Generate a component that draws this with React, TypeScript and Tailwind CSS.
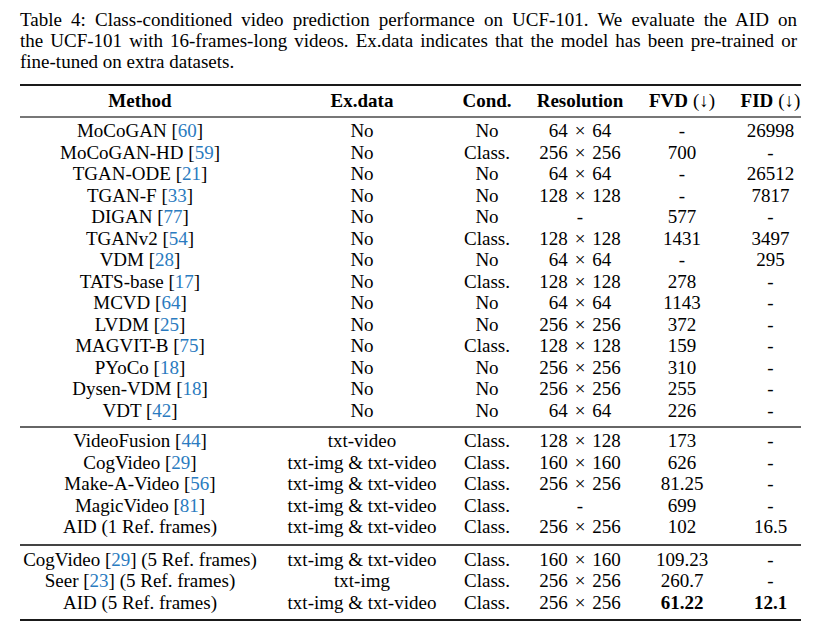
import React from "react";

type Cite = { name: string; cite?: string; suffix?: string };
type Row = {
  m: Cite;
  ex: string;
  cond: string;
  res: string;
  fvd: string;
  fid: string;
  bold?: boolean;
};

const r = (
  name: string,
  cite: string | undefined,
  ex: string,
  cond: string,
  res: string,
  fvd: string,
  fid: string,
  suffix?: string,
  bold?: boolean
): Row => ({ m: { name, cite, suffix }, ex, cond, res, fvd, fid, bold });

const sec1: Row[] = [
  r("MoCoGAN", "60", "No", "No", "64x64", "-", "26998"),
  r("MoCoGAN-HD", "59", "No", "Class.", "256x256", "700", "-"),
  r("TGAN-ODE", "21", "No", "No", "64x64", "-", "26512"),
  r("TGAN-F", "33", "No", "No", "128x128", "-", "7817"),
  r("DIGAN", "77", "No", "No", "-", "577", "-"),
  r("TGANv2", "54", "No", "Class.", "128x128", "1431", "3497"),
  r("VDM", "28", "No", "No", "64x64", "-", "295"),
  r("TATS-base", "17", "No", "Class.", "128x128", "278", "-"),
  r("MCVD", "64", "No", "No", "64x64", "1143", "-"),
  r("LVDM", "25", "No", "No", "256x256", "372", "-"),
  r("MAGVIT-B", "75", "No", "Class.", "128x128", "159", "-"),
  r("PYoCo", "18", "No", "No", "256x256", "310", "-"),
  r("Dysen-VDM", "18", "No", "No", "256x256", "255", "-"),
  r("VDT", "42", "No", "No", "64x64", "226", "-"),
];

const sec2: Row[] = [
  r("VideoFusion", "44", "txt-video", "Class.", "128x128", "173", "-"),
  r("CogVideo", "29", "txt-img & txt-video", "Class.", "160x160", "626", "-"),
  r("Make-A-Video", "56", "txt-img & txt-video", "Class.", "256x256", "81.25", "-"),
  r("MagicVideo", "81", "txt-img & txt-video", "Class.", "-", "699", "-"),
  r("AID (1 Ref. frames)", undefined, "txt-img & txt-video", "Class.", "256x256", "102", "16.5"),
];

const sec3: Row[] = [
  r("CogVideo", "29", "txt-img & txt-video", "Class.", "160x160", "109.23", "-", " (5 Ref. frames)"),
  r("Seer", "23", "txt-img", "Class.", "256x256", "260.7", "-", " (5 Ref. frames)"),
  r("AID (5 Ref. frames)", undefined, "txt-img & txt-video", "Class.", "256x256", "61.22", "12.1", undefined, true),
];

const GRID = "grid grid-cols-[240px_204px_46px_140px_64px_87px]";

function Cell({ children, last }: { children: React.ReactNode; last?: boolean }) {
  return (
    <div className={"flex justify-center whitespace-nowrap " + (last ? "pl-[26px]" : "")}>
      {children}
    </div>
  );
}

function Res({ v }: { v: string }) {
  if (v === "-") return <span>-</span>;
  const [a, b] = v.split("x");
  return (
    <span>
      {a}
      <span className="mx-[7px]">×</span>
      {b}
    </span>
  );
}

function Method({ m }: { m: Cite }) {
  return (
    <span>
      {m.name}
      {m.cite && (
        <>
          {" "}[<span className="text-[#2a7bc0]">{m.cite}</span>]
        </>
      )}
      {m.suffix}
    </span>
  );
}

function DataRow({ row }: { row: Row }) {
  return (
    <div className={GRID + " h-[21.5px] items-center leading-[21.5px]"}>
      <Cell>
        <Method m={row.m} />
      </Cell>
      <Cell>{row.ex}</Cell>
      <Cell>{row.cond}</Cell>
      <Cell>
        <Res v={row.res} />
      </Cell>
      <Cell>{row.bold ? <b>{row.fvd}</b> : row.fvd}</Cell>
      <Cell last>{row.bold ? <b>{row.fid}</b> : row.fid}</Cell>
    </div>
  );
}

export default function App() {
  return (
    <div
      className="w-[827px] h-[627px] bg-white text-black text-[19px] overflow-hidden"
      style={{ fontFamily: '"Liberation Serif", "Times New Roman", serif' }}
    >
      <div className="pt-[9px] pl-[20px] pr-[30px] leading-[21px]">
        <div className="text-justify [text-align-last:justify]">
          Table 4: Class-conditioned video prediction performance on UCF-101. We evaluate the AID on
        </div>
        <div className="text-justify [text-align-last:justify]">
          the UCF-101 with 16-frames-long videos. Ex.data indicates that the model has been pre-trained or
        </div>
        <div>fine-tuned on extra datasets.</div>
      </div>

      <div className="ml-[20px] w-[781px] mt-[12px]">
        <div className="h-[2px] bg-[#1a1a1a]" />
        <div className={GRID + " h-[30px] items-center font-bold"}>
          <Cell>Method</Cell>
          <Cell>Ex.data</Cell>
          <Cell>Cond.</Cell>
          <Cell>Resolution</Cell>
          <Cell>
            FVD<span className="font-normal ml-[5px]">(↓)</span>
          </Cell>
          <Cell last>
            FID<span className="font-normal ml-[5px]">(↓)</span>
          </Cell>
        </div>
        <div className="h-[2px] bg-[#777777]" />
        <div className="pt-[2px]">
          {sec1.map((row, i) => (
            <DataRow key={i} row={row} />
          ))}
        </div>
        <div className="mt-[5px] h-[2px] bg-[#666666]" />
        <div className="pt-[2px]">
          {sec2.map((row, i) => (
            <DataRow key={i} row={row} />
          ))}
        </div>
        <div className="mt-[6px] h-[2px] bg-[#444444]" />
        <div className="pt-[3px]">
          {sec3.map((row, i) => (
            <DataRow key={i} row={row} />
          ))}
        </div>
        <div className="mt-[6px] h-[2px] bg-[#1a1a1a]" />
      </div>
    </div>
  );
}
